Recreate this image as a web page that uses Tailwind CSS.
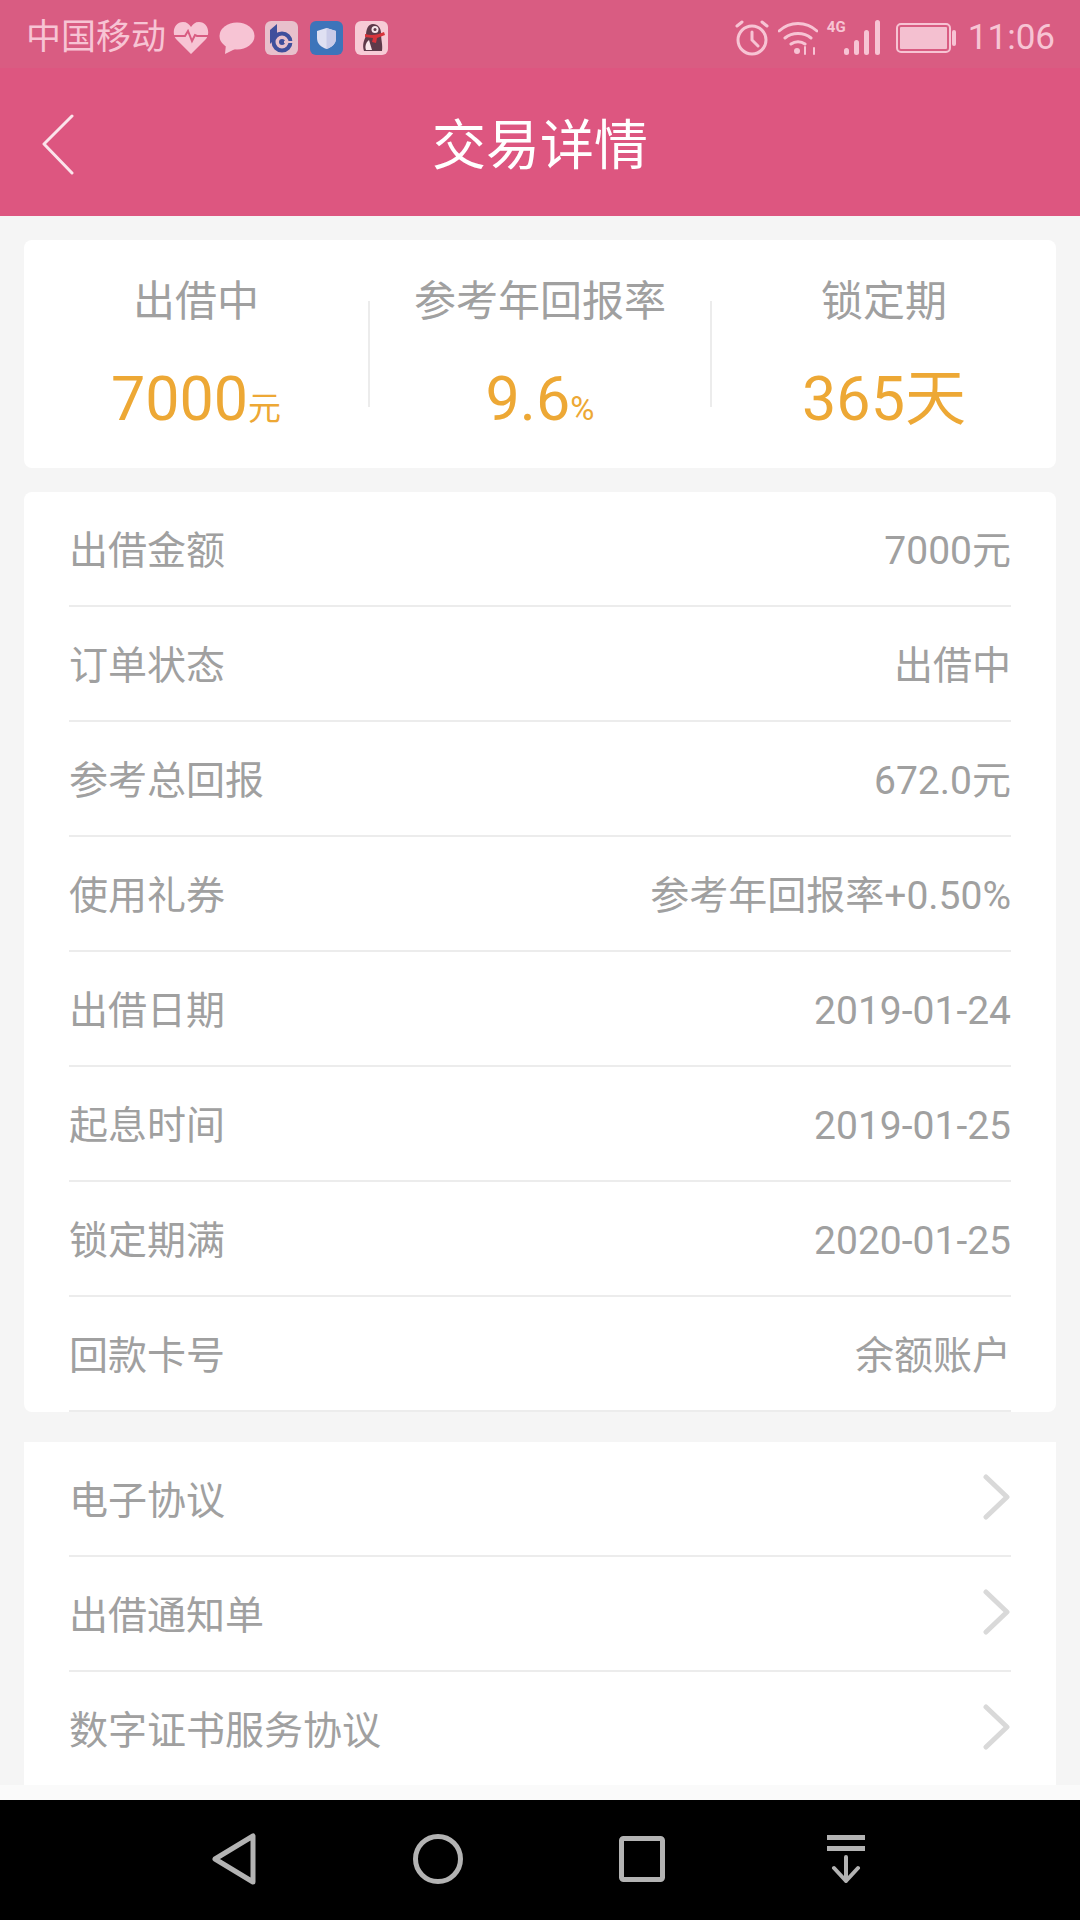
<!DOCTYPE html>
<html lang="zh">
<head>
  <meta charset="UTF-8" />
  <title>交易详情</title>
  <script src="https://cdn.jsdelivr.net/npm/@tailwindcss/browser@4"></script>
</head>
<body class="bg-[#f5f5f5] font-['Roboto','Noto_Sans_CJK_SC',sans-serif]">
<div class="w-[1080px] h-[1920px] flex flex-col overflow-hidden">

  <!-- status bar -->
  <div class="h-[68px] bg-[#d95c82] flex items-center pl-[26px] pr-[25px] pt-[7px] text-[#f7c4d4]">
    <span class="text-[35px] leading-none w-[145px] whitespace-nowrap">中国移动</span>
    <svg class="w-[36px] h-[34px] ml-[2px]" viewBox="0 0 36 34"><path d="M18 33 3 18C-2 11 2 1 10 1c4 0 6 2 8 5 2-3 4-5 8-5 8 0 12 10 7 17Z" fill="#f7c4d4"/><path d="M1 15h11l3-5 4 10 3-6 2 1h12" fill="none" stroke="#d95c82" stroke-width="2"/></svg>
    <svg class="w-[36px] h-[34px] ml-[10px]" viewBox="0 0 36 34"><ellipse cx="18" cy="15" rx="17.500" ry="13.500" fill="#f7c4d4"/><path d="M7 23 6 33l12-6Z" fill="#f7c4d4"/></svg>
    <svg class="w-[33px] h-[34px] ml-[10px]" viewBox="0 0 33 34"><rect width="33" height="34" rx="6" fill="#e8c0cc"/><path d="M5 23V9l7-6v12" fill="#3f4f9c"/><circle cx="17" cy="21" r="8.500" fill="none" stroke="#3f4f9c" stroke-width="4"/><circle cx="17" cy="21" r="3" fill="#3f4f9c"/><path d="M19 21h10" stroke="#e8c0cc" stroke-width="2"/></svg>
    <svg class="w-[33px] h-[34px] ml-[12px]" viewBox="0 0 33 34"><rect width="33" height="34" rx="6" fill="#3d74ba"/><path d="M16.500 7 26 10v7c0 6-4 9-9.500 11C11 26 7 23 7 17v-7Z" fill="#dfe0f2"/><path d="M16.500 7 26 10v7c0 6-4 9-9.500 11Z" fill="#c9cbe8"/></svg>
    <svg class="w-[33px] h-[34px] ml-[12px]" viewBox="0 0 33 34"><rect width="33" height="34" rx="6" fill="#f7cbd6"/><path d="M18 3c5 0 8 4 8 9 0 7 2 12 1 18H9c-2-6 0-11 2-15 0-7 2-12 7-12Z" fill="#5e3a4a"/><ellipse cx="20" cy="8.500" rx="3.500" ry="3.500" fill="#f7e6ea"/><circle cx="20" cy="8.500" r="1.500" fill="#5e3a4a"/><path d="M10 13c7 2 12 1 19-2l1 3-8 3-1 5-4-1 1-4-8-1Z" fill="#d8343c"/><path d="M14 19c-4 3-4 8-3 10h6Z" fill="#f7e6ea"/></svg>

    <svg class="w-[34px] h-[36px] ml-auto" viewBox="0 0 34 36" fill="none" stroke="#f7c4d4" stroke-width="3" stroke-linecap="round"><circle cx="17" cy="20" r="14"/><path d="M17 12v8l6 6M2 6l5-4M32 6l-5-4"/></svg>
    <svg class="w-[40px] h-[34px] ml-[9px]" viewBox="0 0 40 34" fill="none" stroke="#f7c4d4" stroke-width="3" stroke-linecap="round"><path d="M1 10c11-10 27-10 38 0M7 17c7-6 19-6 26 0M13 23c4-3 10-3 14 0"/><circle cx="19" cy="30" r="3" fill="#f7c4d4" stroke="none"/><path d="M27 33v-7M36 27v6" stroke-width="2"/></svg>
    <div class="w-[53px] h-[36px] ml-[9px] relative">
      <span class="absolute left-0 top-0 text-[15px] leading-none font-bold">4G</span>
      <svg class="absolute right-0 top-0 w-[36px] h-[36px]" viewBox="0 0 36 36" fill="#f7c4d4"><rect x="0" y="28" width="5" height="7" rx="2.500"/><rect x="10" y="20" width="5" height="15" rx="2.500"/><rect x="20" y="10" width="5" height="25" rx="2.500"/><rect x="31" y="0" width="5" height="35" rx="2.500"/></svg>
    </div>
    <svg class="w-[62px] h-[30px] ml-[16px]" viewBox="0 0 62 30" fill="none"><rect x="1" y="1" width="53" height="28" rx="4" stroke="#f7c4d4" stroke-width="2"/><rect x="4" y="4" width="47" height="22" rx="1" fill="#f4c0d0"/><rect x="56" y="7" width="4" height="16" rx="2" fill="#f7c4d4"/></svg>
    <span class="text-[35px] leading-none ml-[10px]">11:06</span>
  </div>

  <!-- header -->
  <div class="h-[148px] bg-[#dd5680] relative flex items-center justify-center pt-[10px]">
    <svg class="absolute left-[41px] top-[46px] w-[34px] h-[62px]" viewBox="0 0 34 62" fill="none" stroke="#fbe4eb" stroke-width="3" stroke-linecap="round" stroke-linejoin="round"><path d="M31 2 3 30l28 29"/></svg>
    <h1 class="text-[54px] leading-none text-white">交易详情</h1>
  </div>

  <div class="flex-1 px-[24px] pt-[24px] flex flex-col">
    <!-- summary -->
    <div class="h-[228px] bg-white rounded-[8px] flex items-center">
      <div class="w-[344px] text-center pt-[7px]">
        <p class="text-[42px] leading-none text-[#a0a0a0] mt-[-4px]">出借中</p>
        <p class="text-[61px] leading-none text-[#eda835] mt-[46px]">7000<span class="text-[33px]">元</span></p>
      </div>
      <div class="w-[2px] h-[106px] bg-[#ececec]"></div>
      <div class="w-[340px] text-center pt-[7px]">
        <p class="text-[42px] leading-none text-[#a0a0a0] mt-[-4px]">参考年回报率</p>
        <p class="text-[61px] leading-none text-[#eda835] mt-[46px]">9.6<span class="text-[33px]">%</span></p>
      </div>
      <div class="w-[2px] h-[106px] bg-[#ececec]"></div>
      <div class="flex-1 text-center pt-[7px]">
        <p class="text-[42px] leading-none text-[#a0a0a0] mt-[-4px]">锁定期</p>
        <p class="text-[61px] leading-none text-[#eda835] mt-[46px]">365天</p>
      </div>
    </div>

    <!-- details -->
    <div class="mt-[24px] h-[920px] bg-white rounded-[8px] px-[45px] flex flex-col text-[39px] text-[#a0a0a0]">
      <div class="h-[115px] pt-[5px] border-b-2 border-[#ececec] flex justify-between items-center"><span>出借金额</span><span>7000元</span></div>
      <div class="h-[115px] pt-[5px] border-b-2 border-[#ececec] flex justify-between items-center"><span>订单状态</span><span>出借中</span></div>
      <div class="h-[115px] pt-[5px] border-b-2 border-[#ececec] flex justify-between items-center"><span>参考总回报</span><span>672.0元</span></div>
      <div class="h-[115px] pt-[5px] border-b-2 border-[#ececec] flex justify-between items-center"><span>使用礼券</span><span>参考年回报率+0.50%</span></div>
      <div class="h-[115px] pt-[5px] border-b-2 border-[#ececec] flex justify-between items-center"><span>出借日期</span><span>2019-01-24</span></div>
      <div class="h-[115px] pt-[5px] border-b-2 border-[#ececec] flex justify-between items-center"><span>起息时间</span><span>2019-01-25</span></div>
      <div class="h-[115px] pt-[5px] border-b-2 border-[#ececec] flex justify-between items-center"><span>锁定期满</span><span>2020-01-25</span></div>
      <div class="h-[115px] pt-[5px] border-b-2 border-[#ececec] flex justify-between items-center"><span>回款卡号</span><span>余额账户</span></div>
    </div>

    <!-- agreements -->
    <div class="mt-[30px] h-[343px] bg-white px-[45px] flex flex-col text-[39px] text-[#a0a0a0]">
      <div class="h-[115px] border-b-2 border-[#ececec] flex justify-between items-center"><span class="pt-[5px]">电子协议</span>
        <svg class="w-[28px] h-[46px] mb-[4px]" viewBox="0 0 28 46" fill="none" stroke="#d9d9d9" stroke-width="5" stroke-linecap="round" stroke-linejoin="round"><path d="m3 3 21 20L3 43"/></svg></div>
      <div class="h-[115px] border-b-2 border-[#ececec] flex justify-between items-center"><span class="pt-[5px]">出借通知单</span>
        <svg class="w-[28px] h-[46px] mb-[4px]" viewBox="0 0 28 46" fill="none" stroke="#d9d9d9" stroke-width="5" stroke-linecap="round" stroke-linejoin="round"><path d="m3 3 21 20L3 43"/></svg></div>
      <div class="h-[113px] flex justify-between items-center"><span class="pt-[5px]">数字证书服务协议</span>
        <svg class="w-[28px] h-[46px] mb-[4px]" viewBox="0 0 28 46" fill="none" stroke="#d9d9d9" stroke-width="5" stroke-linecap="round" stroke-linejoin="round"><path d="m3 3 21 20L3 43"/></svg></div>
    </div>
    <div class="h-[15px] bg-[#fafafa] mx-[-24px]"></div>
  </div>

  <!-- navigation bar -->
  <div class="h-[120px] bg-black flex items-center pl-[131px] pb-[2px]">
    <div class="w-[205px] flex justify-center">
      <svg class="w-[44px] h-[52px]" viewBox="0 0 44 52" fill="none" stroke="#b3b3b3" stroke-width="5" stroke-linejoin="round"><path d="M41 3v46L3 26Z"/></svg>
    </div>
    <div class="w-[204px] flex justify-center">
      <svg class="w-[50px] h-[50px]" viewBox="0 0 50 50" fill="none" stroke="#b3b3b3" stroke-width="5"><circle cx="25" cy="25" r="22.500"/></svg>
    </div>
    <div class="w-[204px] flex justify-center">
      <svg class="w-[46px] h-[46px]" viewBox="0 0 46 46" fill="none" stroke="#b3b3b3" stroke-width="5" stroke-linejoin="round"><rect x="2.500" y="2.500" width="41" height="41" rx="2"/></svg>
    </div>
    <div class="w-[204px] flex justify-center">
      <svg class="w-[40px] h-[48px]" viewBox="0 0 40 48" fill="none" stroke="#b3b3b3" stroke-width="4" stroke-linecap="round" stroke-linejoin="round"><path d="M1 2.500h38M1 13.500h38" stroke-width="5" stroke-linecap="butt"/><path d="M20 22v24M8 33l12 13 12-13"/></svg>
    </div>
  </div>
</div>
</body>
</html>
